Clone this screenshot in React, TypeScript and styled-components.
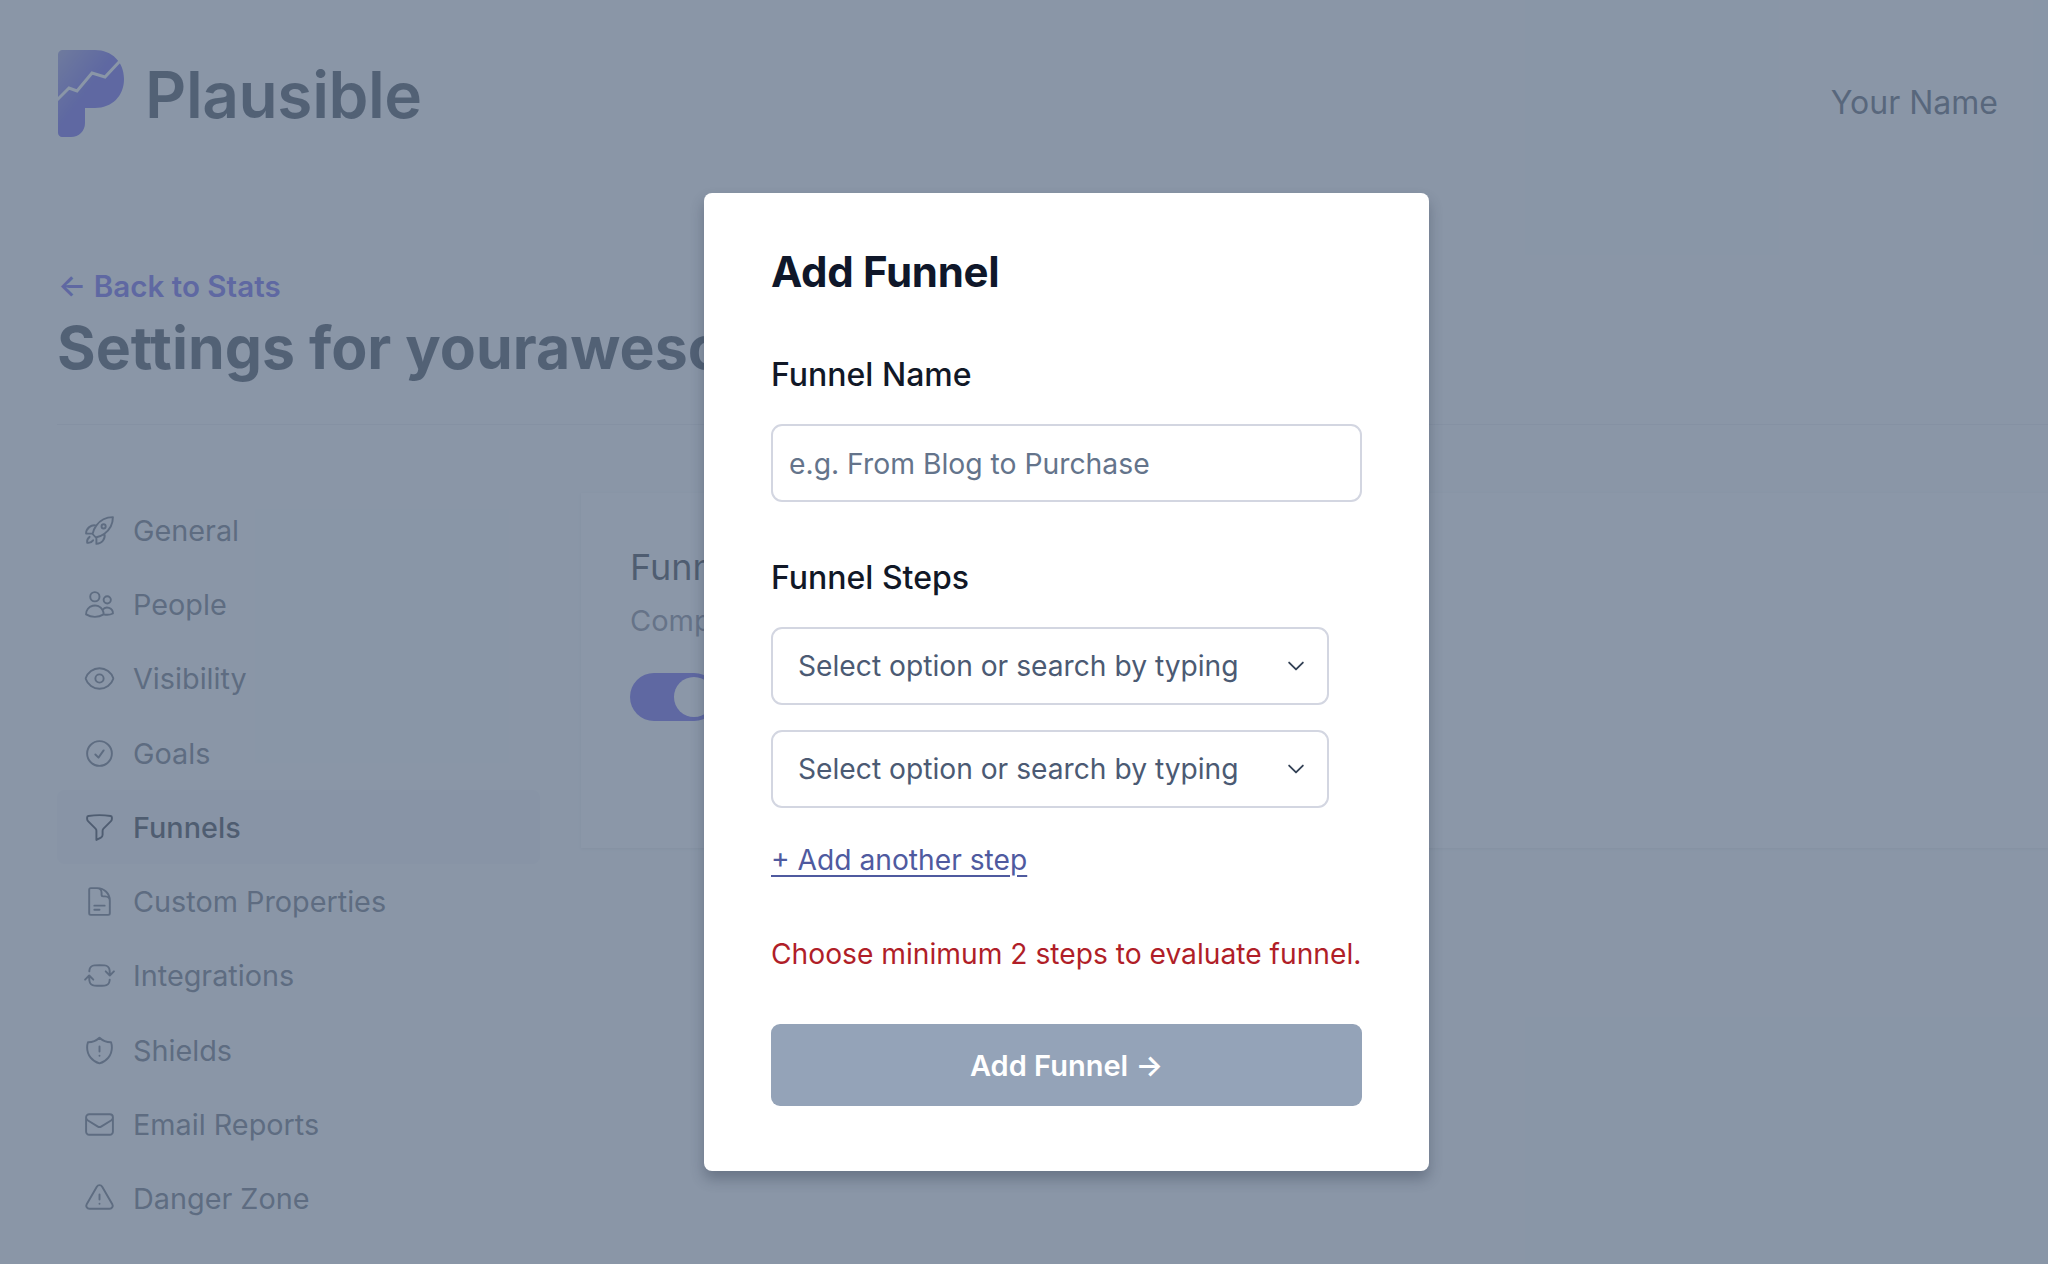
import React from 'react';
import styled, { createGlobalStyle } from 'styled-components';
import {
  HiOutlineRocketLaunch,
  HiOutlineUsers,
  HiOutlineEye,
  HiOutlineCheckCircle,
  HiOutlineFunnel,
  HiOutlineDocumentText,
  HiOutlineArrowPathRoundedSquare,
  HiOutlineShieldExclamation,
  HiOutlineEnvelope,
  HiOutlineExclamationTriangle,
  HiOutlineChevronDown,
} from 'react-icons/hi2';

const GlobalStyle = createGlobalStyle`
  html, body {
    margin: 0;
    padding: 0;
    background: #f9fafb;
  }
  * { box-sizing: border-box; }
  body {
    font-family: Inter, "Liberation Sans", sans-serif;
    -webkit-font-smoothing: antialiased;
  }
`;

const Page = styled.div`
  position: relative;
  width: 2048px;
  height: 1264px;
  overflow: hidden;
  background: #f9fafb;
`;

const Header = styled.header`
  display: flex;
  justify-content: space-between;
  align-items: center;
  height: 88px;
  margin: 50px 50px 0 57px;
`;

const Brand = styled.div`
  display: flex;
  align-items: center;
  gap: 20px;
`;

const Wordmark = styled.span`
  font-size: 64px;
  font-weight: 600;
  letter-spacing: -0.4px;
  color: #1f2937;
`;

const UserName = styled.span`
  font-size: 32px;
  color: #374151;
  margin-top: 17px;
`;

const TitleBlock = styled.div`
  margin: 130px 0 0 57px;
`;

const BackLink = styled.a`
  display: flex;
  align-items: center;
  height: 36px;
  padding-left: 1px;
  font-size: 29.6px;
  font-weight: 600;
  color: #4f46e5;
`;

const PageTitle = styled.h1`
  margin: 8px 0 0;
  font-size: 59px;
  line-height: 72px;
  font-weight: 700;
  white-space: nowrap;
  color: #1f2937;
`;

const Divider = styled.hr`
  margin: 40px 0 68px 57px;
  border: 0;
  border-top: 1px solid #e5e7eb;
`;

const Content = styled.div`
  display: flex;
  gap: 41px;
  padding-left: 57px;
`;

const Sidebar = styled.nav`
  width: 483px;
  flex: none;
`;

const NavItem = styled.a<{ $active?: boolean }>`
  display: flex;
  align-items: center;
  gap: 17px;
  height: 74.3px;
  padding-left: 26px;
  border-radius: 8px;
  font-size: 28.8px;
  font-weight: ${(p) => (p.$active ? 500 : 400)};
  color: ${(p) => (p.$active ? '#111827' : '#4b5563')};
  background: ${(p) => (p.$active ? '#f1f2f5' : 'transparent')};

  svg {
    width: 33px;
    height: 33px;
    flex: none;
    stroke-width: 1.4;
  }
`;

const Card = styled.section`
  flex: 1;
  height: 355px;
  padding: 50px 49px;
  background: #fff;
  box-shadow: 0 1px 3px rgba(0, 0, 0, 0.1);
`;

const CardTitle = styled.h2`
  margin: 0;
  font-size: 36px;
  line-height: 48px;
  font-weight: 400;
  color: #111827;
`;

const CardText = styled.p`
  margin: 6px 0 0;
  font-size: 29px;
  line-height: 48px;
  color: #6b7280;
`;

const Toggle = styled.div`
  display: flex;
  justify-content: flex-end;
  align-items: center;
  width: 88px;
  height: 48px;
  margin-top: 28px;
  padding-right: 4px;
  border-radius: 24px;
  background: #4f46e5;
`;

const Knob = styled.span`
  width: 40px;
  height: 40px;
  border-radius: 50%;
  background: #fff;
`;

const Overlay = styled.div`
  position: absolute;
  inset: 0;
  padding: 193px 0 0 704px;
  background: rgba(100, 116, 139, 0.75);
`;

const Modal = styled.div`
  display: flex;
  flex-direction: column;
  width: 725px;
  height: 978px;
  padding: 51px 67px 0;
  border-radius: 8px;
  background: #fff;
  box-shadow: 0 8px 14px rgba(30, 41, 59, 0.3);
`;

const ModalTitle = styled.h2`
  margin: 0;
  font-size: 42px;
  line-height: 56px;
  font-weight: 700;
  letter-spacing: -0.3px;
  color: #0f172a;
`;

const FieldLabel = styled.label<{ $top: number }>`
  margin-top: ${(p) => p.$top}px;
  font-size: 32px;
  line-height: 44px;
  font-weight: 450;
  color: #111827;
`;

const TextInput = styled.input`
  width: 591px;
  height: 78px;
  margin-top: 27px;
  padding: 2px 22px 0 16px;
  border: 2px solid #d3d6e1;
  border-radius: 11px;
  font-family: inherit;
  font-size: 28.3px;
  color: #111827;

  &::placeholder {
    color: #64748b;
    opacity: 1;
  }
`;

const StepList = styled.div`
  display: flex;
  flex-direction: column;
  gap: 25px;
  margin-top: 27px;
`;

const StepSelect = styled.div`
  display: flex;
  align-items: center;
  justify-content: space-between;
  width: 558px;
  height: 78px;
  padding: 0 20px 0 25px;
  border: 2px solid #d3d6e1;
  border-radius: 11px;
  font-size: 28.2px;
  color: #4b5a73;

  svg {
    width: 22px;
    height: 22px;
    stroke-width: 2;
    color: #334155;
  }
`;

const AddStep = styled.a`
  align-self: flex-start;
  margin-top: 34px;
  font-size: 28.2px;
  line-height: 36px;
  color: #4f5a9f;
  text-decoration: underline;
  text-decoration-thickness: 2px;
  text-underline-offset: 5px;
`;

const ErrorText = styled.p`
  margin: 58px 0 0;
  font-size: 28.2px;
  line-height: 36px;
  white-space: nowrap;
  color: #b01e28;
`;

const SubmitButton = styled.button`
  width: 591px;
  height: 82px;
  margin-top: 52px;
  border: 0;
  border-radius: 9px;
  font-family: inherit;
  font-size: 29px;
  font-weight: 600;
  color: #fff;
  background: #94a3b8;
`;

const PlausibleLogo = () => (
  <svg width="68" height="88" viewBox="9 11 66 88" fill="none">
    <defs>
      <linearGradient id="logoFill" x1="0" y1="0" x2="1" y2="1">
        <stop offset="0" stopColor="#8f8fd6" />
        <stop offset="0.45" stopColor="#4f46e5" />
        <stop offset="1" stopColor="#4f46e5" />
      </linearGradient>
    </defs>
    <path
      d="M9 16 C9 13 11 11 14 11 H46 C63 11 75 23 75 40 C75 57 63 69 46 69 H36 V84 C36 92 30 98 22 98 H13 C11 98 9 96 9 94 Z"
      fill="url(#logoFill)"
    />
    <polyline
      points="8,61 20,49 28,52 43,34 56,38 71,22"
      stroke="#f9fafb"
      strokeWidth="3"
      fill="none"
    />
  </svg>
);

const navItems = [
  { label: 'General', icon: HiOutlineRocketLaunch },
  { label: 'People', icon: HiOutlineUsers },
  { label: 'Visibility', icon: HiOutlineEye },
  { label: 'Goals', icon: HiOutlineCheckCircle },
  { label: 'Funnels', icon: HiOutlineFunnel, active: true },
  { label: 'Custom Properties', icon: HiOutlineDocumentText },
  { label: 'Integrations', icon: HiOutlineArrowPathRoundedSquare },
  { label: 'Shields', icon: HiOutlineShieldExclamation },
  { label: 'Email Reports', icon: HiOutlineEnvelope },
  { label: 'Danger Zone', icon: HiOutlineExclamationTriangle },
];

function App() {
  return (
    <Page>
      <GlobalStyle />
      <Header>
        <Brand>
          <PlausibleLogo />
          <Wordmark>Plausible</Wordmark>
        </Brand>
        <UserName>Your Name</UserName>
      </Header>

      <TitleBlock>
        <BackLink>← Back to Stats</BackLink>
        <PageTitle>Settings for yourawesomesite.com</PageTitle>
      </TitleBlock>
      <Divider />

      <Content>
        <Sidebar>
          {navItems.map(({ label, icon: Icon, active }) => (
            <NavItem key={label} $active={active}>
              <Icon />
              {label}
            </NavItem>
          ))}
        </Sidebar>
        <Card>
          <CardTitle>Funnels</CardTitle>
          <CardText>Compose Funnels on your dashboard</CardText>
          <Toggle>
            <Knob />
          </Toggle>
        </Card>
      </Content>

      <Overlay>
        <Modal>
          <ModalTitle>Add Funnel</ModalTitle>
          <FieldLabel $top={53}>Funnel Name</FieldLabel>
          <TextInput placeholder="e.g. From Blog to Purchase" />
          <FieldLabel $top={54}>Funnel Steps</FieldLabel>
          <StepList>
            <StepSelect>
              Select option or search by typing
              <HiOutlineChevronDown />
            </StepSelect>
            <StepSelect>
              Select option or search by typing
              <HiOutlineChevronDown />
            </StepSelect>
          </StepList>
          <AddStep>+ Add another step</AddStep>
          <ErrorText>Choose minimum 2 steps to evaluate funnel.</ErrorText>
          <SubmitButton>Add Funnel →</SubmitButton>
        </Modal>
      </Overlay>
    </Page>
  );
}

export default App;
